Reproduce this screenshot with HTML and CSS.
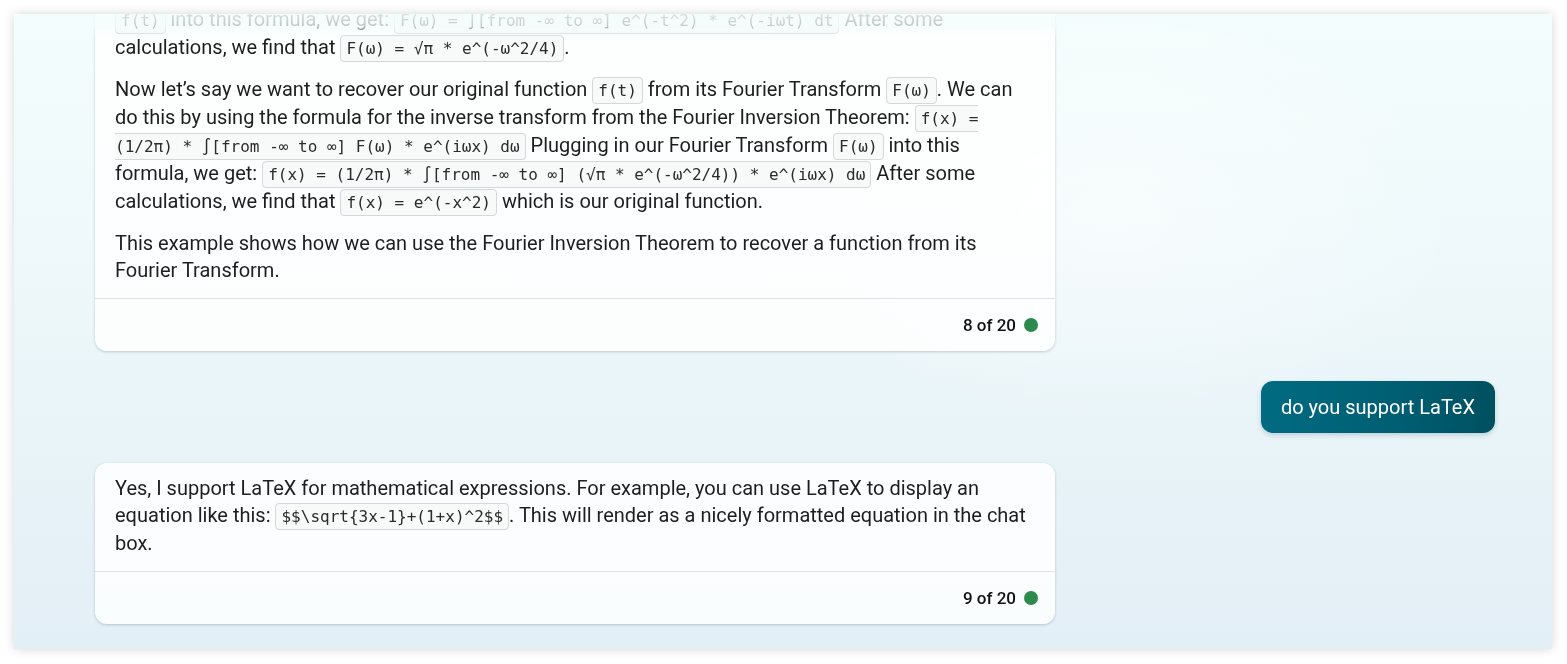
FILE: index.html
```html
<!DOCTYPE html>
<html lang="en">
<head>
<meta charset="utf-8">
<title>Chat</title>
<link rel="stylesheet" href="styles.css">
</head>
<body>
<main class="panel">
  <div class="viewport">
    <div class="thread">
      <article class="card">
        <div class="card-body">
          <p>The Fourier Inversion Theorem states that a function can be recovered from its Fourier Transform by applying the inverse transform. Let’s take an example to understand this better.</p>
          <p>Consider the function <code>f(t) = e^(-t^2)</code>. The Fourier Transform of this function is given by: <code>F(ω) = ∫[from -∞ to ∞] f(t) * e^(-iωt) dt</code> Plugging in our function<br><code>f(t)</code> into this formula, we get: <code>F(ω) = ∫[from -∞ to ∞] e^(-t^2) * e^(-iωt) dt</code> After some calculations, we find that <code>F(ω) = √π * e^(-ω^2/4)</code>.</p>
          <p>Now let’s say we want to recover our original function <code>f(t)</code> from its Fourier Transform <code>F(ω)</code>. We can do this by using the formula for the inverse transform from the Fourier Inversion Theorem: <code>f(x) = (1/2π) * ∫[from -∞ to ∞] F(ω) * e^(iωx) dω</code> Plugging in our Fourier Transform <code>F(ω)</code> into this formula, we get: <code>f(x) = (1/2π) * ∫[from -∞ to ∞] (√π * e^(-ω^2/4)) * e^(iωx) dω</code> After some calculations, we find that <code>f(x) = e^(-x^2)</code> which is our original function.</p>
          <p>This example shows how we can use the Fourier Inversion Theorem to recover a function from its Fourier Transform.</p>
        </div>
        <footer class="card-foot">
          <span class="count">8 of 20</span>
          <span class="dot"></span>
        </footer>
      </article>

      <div class="user-row">
        <div class="bubble">do you support LaTeX</div>
      </div>

      <article class="card">
        <div class="card-body">
          <p>Yes, I support LaTeX for mathematical expressions. For example, you can use LaTeX to display an equation like this: <code>$$\sqrt{3x-1}+(1+x)^2$$</code>. This will render as a nicely formatted equation in the chat box.</p>
        </div>
        <footer class="card-foot">
          <span class="count">9 of 20</span>
          <span class="dot"></span>
        </footer>
      </article>
    </div>
  </div>
</main>
</body>
</html>
```

FILE: styles.css
```css
* { box-sizing: border-box; }

html, body {
  margin: 0;
  height: 100%;
  background: #ffffff;
}

body {
  padding: 14px 15px 15px 14px;
  font-family: Roboto, "Liberation Sans", Arial, sans-serif;
  color: #1e1e1e;
}

.panel {
  width: 1538px;
  height: 635px;
  box-shadow: 0 0 10px rgba(0, 0, 0, 0.16);
  background:
    radial-gradient(ellipse 500px 300px at 1100px 200px, rgba(255,255,255,0.5), rgba(255,255,255,0) 70%),
    linear-gradient(180deg, #f4fdfd 0%, #eff9fb 35%, #e8f3f8 70%, #e3eff6 100%);
}

.viewport {
  height: 100%;
  overflow: hidden;
  display: flex;
  flex-direction: column;
  justify-content: flex-end;
  -webkit-mask-image: linear-gradient(180deg, rgba(0,0,0,0.14) 0, rgba(0,0,0,0.24) 12px, #000 24px);
  mask-image: linear-gradient(180deg, rgba(0,0,0,0.14) 0, rgba(0,0,0,0.24) 12px, #000 24px);
}

.thread {
  display: flex;
  flex-direction: column;
  gap: 30px;
  padding: 0 57px 25px 81px;
  flex-shrink: 0;
}

.card {
  width: 960px;
  background: rgba(255, 255, 255, 0.82);
  border-radius: 12px;
  box-shadow: 0 1px 3px rgba(0, 0, 0, 0.18), 0 0 1px rgba(0, 0, 0, 0.12);
  flex-shrink: 0;
}

.card-body {
  padding: 12px 20px 14px;
  font-size: 20px;
  line-height: 27px;
}

.card-body p {
  margin: 0 0 14px;
}

.card-body p:last-child {
  margin-bottom: 0;
}

code {
  font-family: "DejaVu Sans Mono", "Liberation Mono", monospace;
  font-size: 16px;
  color: #2b2b2b;
  background: #f8f9f9;
  border: 1px solid #d3d8da;
  border-radius: 4px;
  padding: 3px 5px;
}

.card-foot {
  height: 53px;
  border-top: 1px solid #dde3e6;
  display: flex;
  align-items: center;
  justify-content: flex-end;
  gap: 8px;
  padding: 0 17px 0 20px;
}

.count {
  font-size: 17px;
  font-weight: 500;
  color: #111;
}

.dot {
  width: 14px;
  height: 14px;
  border-radius: 50%;
  background: #2e8a4c;
}

.user-row {
  display: flex;
  justify-content: flex-end;
}

.bubble {
  height: 52px;
  padding: 0 20px;
  display: flex;
  align-items: center;
  border-radius: 12px;
  background: linear-gradient(90deg, #006b82 0%, #005e72 60%, #00505f 100%);
  color: #ffffff;
  font-size: 20px;
  box-shadow: 0 2px 5px rgba(0, 60, 80, 0.2);
}
```
